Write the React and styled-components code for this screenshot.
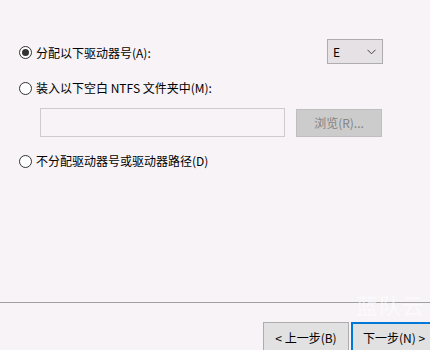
import React, { useState } from 'react';
import styled, { createGlobalStyle } from 'styled-components';

const GlobalStyle = createGlobalStyle`
  html, body {
    margin: 0;
    padding: 0;
    background: #f7f3f7;
  }
  body {
    font-family: 'Noto Sans CJK SC', 'Noto Sans', sans-serif;
    font-size: 12px;
    color: #000;
  }
`;

export default function App() {
  const [choice, setChoice] = useState('letter');
  const [drive, setDrive] = useState('E');

  return (
    <Page>
      <GlobalStyle />
      <Content>
        <FirstRow>
          <RadioLabel onClick={() => setChoice('letter')}>
            <Radio checked={choice === 'letter'} />
            分配以下驱动器号(A):
          </RadioLabel>
          <Select onClick={() => setDrive(drive)}>
            <span>{drive}</span>
            <svg width="9" height="6" viewBox="0 0 9 6">
              <path d="M0.5 0.8 L4.5 4.8 L8.5 0.8" fill="none" stroke="#444" strokeWidth="1" />
            </svg>
          </Select>
        </FirstRow>

        <OptionRow top="15px">
          <RadioLabel onClick={() => setChoice('folder')}>
            <Radio checked={choice === 'folder'} />
            装入以下空白 NTFS 文件夹中(M):
          </RadioLabel>
        </OptionRow>

        <PathRow>
          <PathInput />
          <BrowseButton disabled>浏览(R)...</BrowseButton>
        </PathRow>

        <OptionRow top="16px">
          <RadioLabel onClick={() => setChoice('none')}>
            <Radio checked={choice === 'none'} />
            不分配驱动器号或驱动器路径(D)
          </RadioLabel>
        </OptionRow>
      </Content>

      <Footer>
        <Button>&lt; 上一步(B)</Button>
        <Button primary>下一步(N) &gt;</Button>
      </Footer>
      <Watermark>蓝队云</Watermark>
    </Page>
  );
}

const Page = styled.div`
  position: relative;
  height: 350px;
  display: flex;
  flex-direction: column;
  overflow: hidden;
`;

const Content = styled.div`
  flex: 1;
  padding: 38px 47px 0 19px;
`;

const FirstRow = styled.div`
  display: flex;
  justify-content: space-between;
  align-items: center;
  height: 25px;
  padding-top: 2px;
`;

const OptionRow = styled.div`
  display: flex;
  align-items: center;
  height: 16px;
  margin-top: ${props => props.top};
`;

const RadioLabel = styled.label`
  display: flex;
  align-items: center;
  gap: 4px;
  line-height: 16px;
  cursor: default;
  user-select: none;
`;

const Radio = styled.span`
  box-sizing: border-box;
  width: 13px;
  height: 13px;
  border: 1px solid #333;
  border-radius: 50%;
  background: #fff;
  position: relative;
  flex-shrink: 0;

  &::after {
    content: '';
    display: ${props => (props.checked ? 'block' : 'none')};
    position: absolute;
    left: 2px;
    top: 2px;
    width: 7px;
    height: 7px;
    border-radius: 50%;
    background: #333;
  }
`;

const Select = styled.div`
  box-sizing: border-box;
  width: 56px;
  height: 25px;
  margin-top: -2px;
  display: flex;
  align-items: center;
  justify-content: space-between;
  padding: 0 6px 0 5px;
  background: #e5e1e5;
  border: 1px solid #adadad;
  font-size: 12px;
`;

const PathRow = styled.div`
  display: flex;
  align-items: center;
  gap: 11px;
  margin: 12px 0 0 21px;
`;

const PathInput = styled.div`
  box-sizing: border-box;
  width: 245px;
  height: 29px;
  border: 1px solid #cccccc;
  background: #f7f3f7;
`;

const BrowseButton = styled.button`
  box-sizing: border-box;
  width: 86px;
  height: 28px;
  padding: 0;
  background: #cccccc;
  border: 1px solid #bfbfbf;
  color: #838383;
  font: 12px 'Noto Sans CJK SC', 'Noto Sans', sans-serif;
`;

const Footer = styled.div`
  display: flex;
  justify-content: flex-end;
  gap: 2px;
  border-top: 1px solid #a0a0a0;
  padding-top: 19px;
  margin-right: -7px;
  height: 28px;
`;

const Button = styled.button`
  box-sizing: border-box;
  width: 86px;
  height: 30px;
  padding: 0;
  flex-shrink: 0;
  background: #e1e1e1;
  border: ${props => (props.primary ? '2px solid #0078d7' : '1px solid #adadad')};
  color: #000;
  font: 12px 'Noto Sans CJK SC', 'Noto Sans', sans-serif;
`;

const Watermark = styled.div`
  position: absolute;
  left: 356px;
  top: 288px;
  font-size: 22px;
  letter-spacing: 1px;
  color: rgba(255, 255, 255, 0.55);
  pointer-events: none;
`;
